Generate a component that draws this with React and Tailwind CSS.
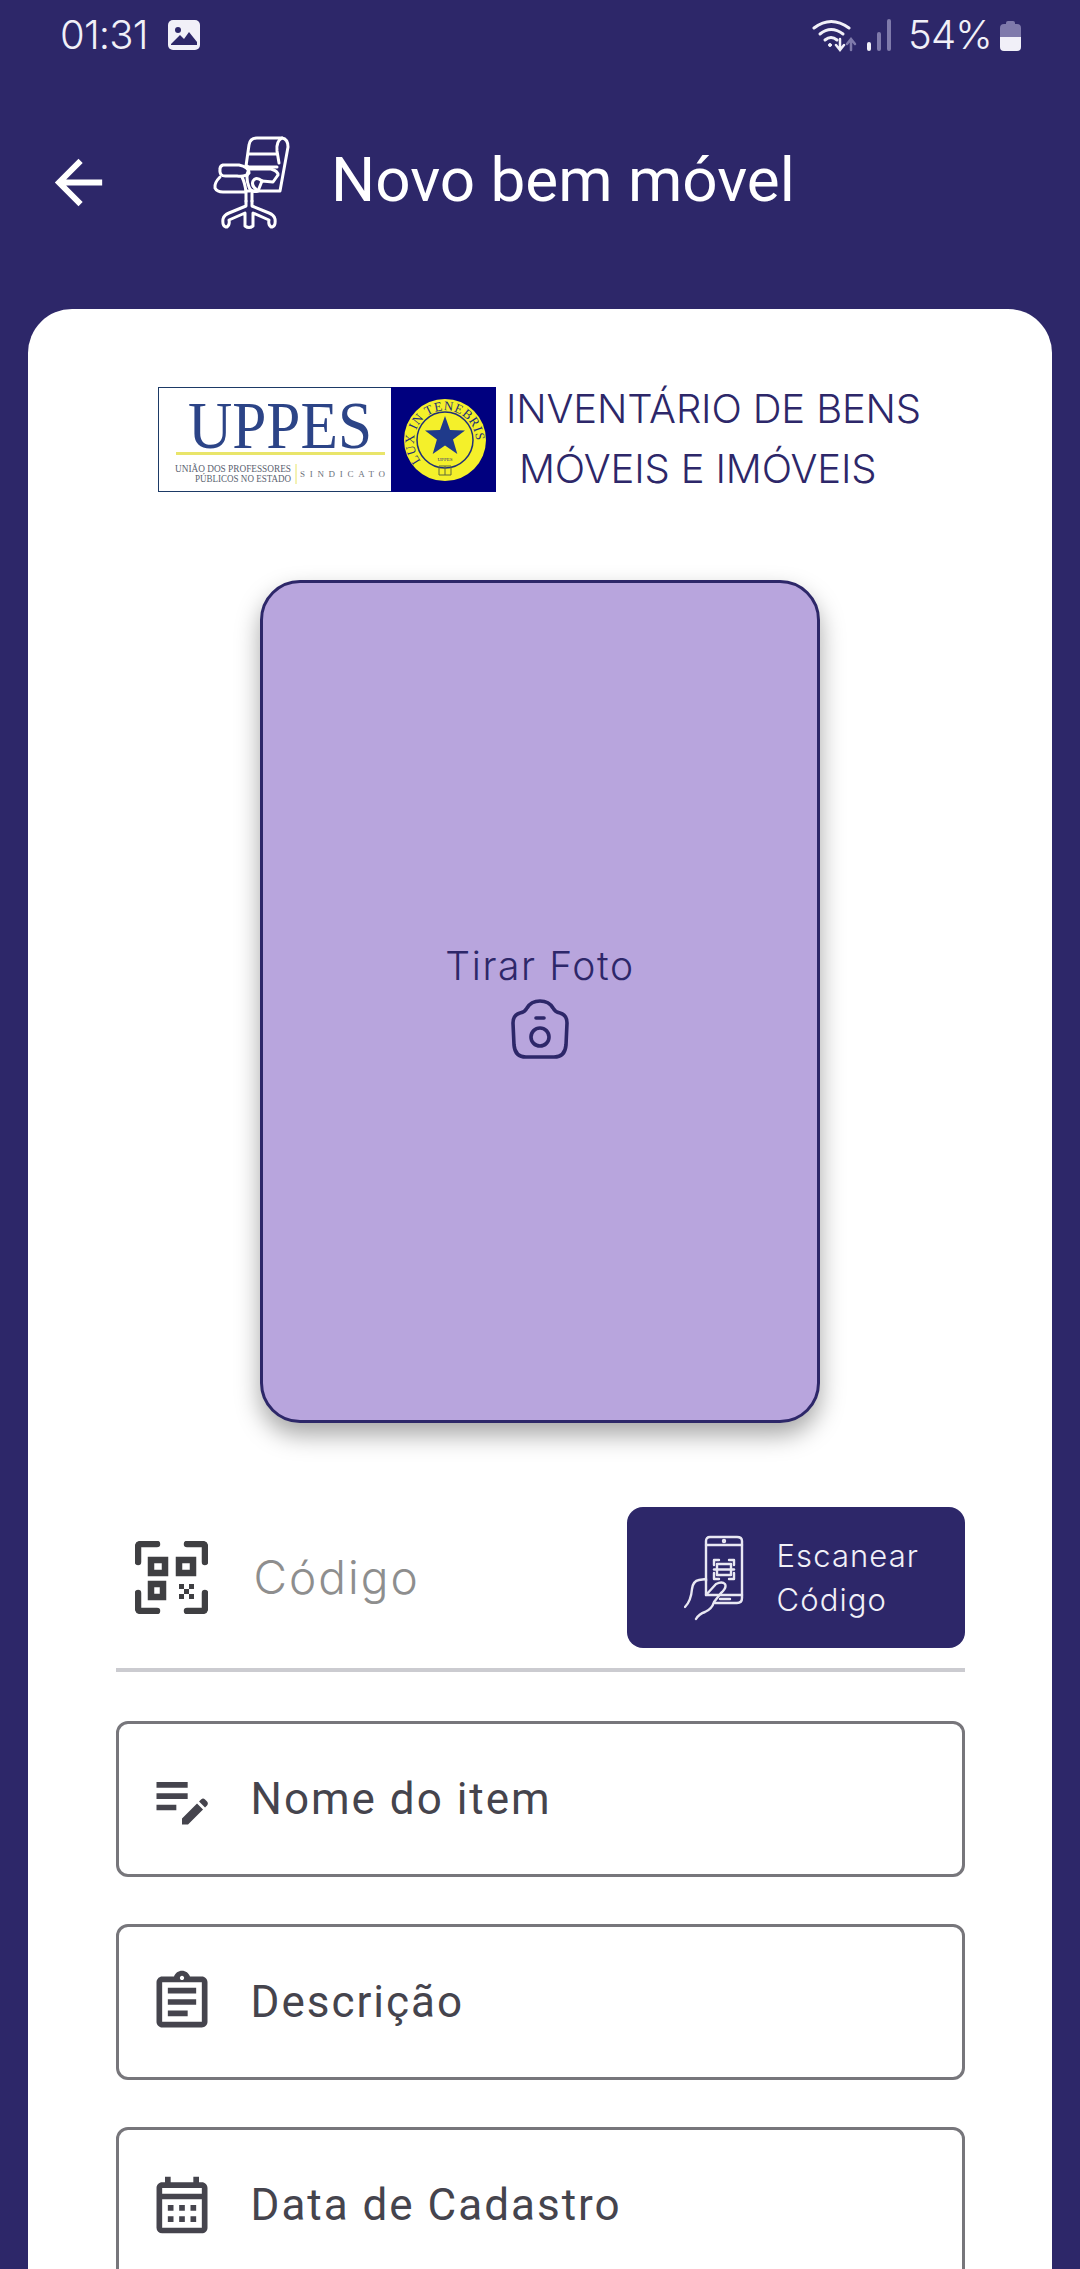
import { MdArrowBack, MdEditNote, MdOutlineAssignment, MdOutlineCalendarMonth } from 'react-icons/md';

const StatusBar = () => (
    <div className="h-[70px] shrink-0 flex items-end justify-between pb-[12px] pl-[60px] pr-[59px] text-[#f1f0f8] font-['Inter',sans-serif] text-[40px] leading-[46px]">
        <div className="flex items-center gap-[16px]">
            <span className="w-[92px] tracking-[-0.8px] font-light">01:31</span>
            <svg width="32" height="30" viewBox="0 0 32 30">
                <rect width="32" height="30" rx="5" fill="#f1f0f8" />
                <circle cx="10" cy="10" r="3" fill="#2d2769" />
                <path d="M3 24 L12 15 L16 19 L21 12 L29 22 L29 25 L3 25 Z" fill="#2d2769" />
            </svg>
        </div>
        <div className="flex items-center">
            <svg width="84" height="34" viewBox="0 0 84 34" fill="none" stroke="#f1f0f8" strokeLinecap="round">
                <path d="M3 10 Q20 -3 38 10" strokeWidth="3" />
                <path d="M9 16 Q20 7 32 16" strokeWidth="3" />
                <path d="M14 22 Q20 17 26 22" strokeWidth="3" />
                <circle cx="19" cy="27" r="1.5" fill="#f1f0f8" />
                <path d="M29 21 V31 M25 27 L29 32 L33 27" strokeWidth="2.5" />
                <path d="M40 32 V22 M36 26 L40 21 L44 26" strokeWidth="2.5" stroke="#7f7aab" />
                <path d="M58 31 V26" strokeWidth="4" />
                <path d="M68 31 V16" strokeWidth="4" stroke="#7f7aab" />
                <path d="M78 31 V3" strokeWidth="4" stroke="#7f7aab" />
            </svg>
            <span className="ml-[13px] w-[86px] tracking-[-0.8px] font-light">54%</span>
            <svg className="ml-[6px]" width="21" height="31" viewBox="0 0 21 31">
                <path d="M6 3 Q6 1 8 1 H13 Q15 1 15 3 V4 H17 Q21 4 21 8 V17 H0 V8 Q0 4 4 4 H6 Z" fill="#7f7aab" />
                <path d="M0 17 H21 V27 Q21 31 17 31 H4 Q0 31 0 27 Z" fill="#f1f0f8" />
            </svg>
        </div>
    </div>
);

const ChairIcon = () => (
    <svg width="78" height="97" viewBox="13 13 78 97" fill="none" stroke="#ffffff" strokeWidth="3" strokeLinejoin="round" strokeLinecap="round">
        <path d="M47 45 L50 24 Q51 17 58 17 H83 Q89 18 89 26 L81 70 H47" />
        <path d="M83 17 Q77 20 78 30 L80 42" />
        <path d="M50 33 H78" />
        <path d="M48 45 L50 46 H78" />
        <path d="M24 44 H40 Q50 46 50 52 Q47 56 38 55 H28 Q20 56 21 48 Q21 45 24 44 Z" />
        <path d="M21 56 Q15 62 16 67 Q18 71 24 71 H47 Q46 62 43 56" />
        <path d="M50 48 H72 Q79 50 79 54 L74 61 L63 60 L59 70 Q52 72 50 66 Q46 56 50 48 Z" />
        <path d="M63 60 Q57 55 54 60 Q52 65 58 69" />
        <path d="M47 72 V80 M53 72 V80" />
        <path d="M47 80 V85 L30 92 Q25 94 24 98 Q23 106 28 106 Q31 104 30 99 L46 92 V105 Q50 108 54 105 V92 L70 99 Q69 104 72 106 Q77 106 76 98 Q75 94 70 92 L53 85 V80" />
    </svg>
);

const UppesLogo = () => (
    <svg width="338" height="105" viewBox="158 387 338 105" className="shrink-0">
        <rect x="158.500" y="387.500" width="337" height="104" fill="#ffffff" stroke="#1d3a66" />
        <rect x="391" y="387" width="105" height="105" fill="#00007f" />
        <text x="280" y="448" textAnchor="middle" fontFamily="'Liberation Serif',serif" fontSize="68" textLength="184" lengthAdjust="spacingAndGlyphs" fill="#2c4487">UPPES</text>
        <rect x="176" y="452" width="209" height="3" fill="#e9e56a" />
        <text x="233" y="472" textAnchor="middle" fontFamily="'Liberation Serif',serif" fontSize="9.5" textLength="116" lengthAdjust="spacingAndGlyphs" fill="#5a5f70">UNIÃO DOS PROFESSORES</text>
        <text x="243" y="482" textAnchor="middle" fontFamily="'Liberation Serif',serif" fontSize="9.5" textLength="96" lengthAdjust="spacingAndGlyphs" fill="#5a5f70">PÚBLICOS NO ESTADO</text>
        <path d="M296 464 V484" stroke="#e9e56a" />
        <text x="300" y="477" fontFamily="'Liberation Serif',serif" fontSize="9" textLength="85" fill="#6b6f7a">SINDICATO</text>
        <circle cx="445" cy="440" r="41" fill="#f4f02a" />
        <circle cx="445" cy="440" r="28" fill="none" stroke="#1f2f78" strokeWidth="1.5" />
        <path id="luxArc" d="M421 461 A31 31 0 1 1 469 461" fill="none" />
        <text fontFamily="'Liberation Serif',serif" fontSize="13" letterSpacing="0.6" fill="#1f2f78">
            <textPath href="#luxArc">LUX IN TENEBRIS</textPath>
        </text>
        <path d="M445 416 L450 430 L465 430.500 L453 439.600 L457.300 454 L445 445.500 L432.700 454 L436.900 439.600 L425 430.500 L440 430 Z" fill="#1f3a8a" />
        <text x="445" y="461" textAnchor="middle" fontFamily="'Liberation Serif',serif" fontSize="5" fill="#1f2f78">UPPES</text>
        <path d="M439 466 H451 V475 H439 Z M445 466 V475" fill="none" stroke="#5f6a3a" strokeWidth="1" />
    </svg>
);

const CameraIcon = () => (
    <svg width="58" height="60" viewBox="0 0 58 60" fill="none" stroke="#2d2769" strokeWidth="3.6" strokeLinecap="round" strokeLinejoin="round">
        <path d="M2 24 Q2 16 9 14 Q14 13 16 9 Q20 2 29 2 Q38 2 42 9 Q44 13 49 14 Q56 16 56 24 L55 46 Q54 58 43 58 H15 Q4 58 3 46 Z" />
        <circle cx="29" cy="38" r="9" />
        <path d="M25 19 H33" />
    </svg>
);

const QrIcon = () => (
    <svg width="73" height="73" viewBox="0 0 73 73" fill="none" stroke="#3f3f42" strokeWidth="6.5" strokeLinecap="round">
        <path d="M3 21 V6 Q3 3 6 3 H22" />
        <path d="M52 3 H67 Q70 3 70 6 V21" />
        <path d="M3 52 V67 Q3 70 6 70 H22" />
        <path d="M52 70 H67 Q70 70 70 67 V52" />
        <rect x="16" y="19" width="14" height="13" />
        <rect x="44" y="19" width="14" height="13" />
        <rect x="16" y="43" width="12" height="13" />
        <path d="M44 43 h5 v5 h-5 z M54 43 h5 v5 h-5 z M49 48 h5 v5 h-5 z M44 53 h5 v5 h-5 z M54 53 h5 v5 h-5 z" fill="#3f3f42" stroke="none" />
    </svg>
);

const ScanPhoneIcon = () => (
    <svg width="60" height="86" viewBox="0 0 60 86" fill="none" stroke="#e9e8f3" strokeWidth="2.4" strokeLinecap="round" strokeLinejoin="round">
        <path d="M22 46 V6 Q22 2 26 2 H53 Q58 2 58 6 V63 Q58 68 53 68 H31" />
        <path d="M22 10 H58 M22 60 H58" />
        <path d="M36 64 H46" />
        <circle cx="40" cy="6" r="1" />
        <path d="M30 30 V25 H35 M45 25 H50 V30 M30 38 V44 H35 M45 44 H50 V38" />
        <rect x="33" y="29" width="14" height="11" />
        <path d="M30 34.500 H50" />
        <path d="M1 72 Q7 66 8 54 Q9 46 15 45 L22 44 V60 L32 49 Q38 46 41 49 Q43 53 37 58 L30 67 Q28 74 21 77 Q15 79 12 84" />
    </svg>
);

const Field = ({ icon: Icon, label }) => (
    <div className="h-[156px] shrink-0 rounded-[12px] border-[3px] border-[#77767b] flex items-center pl-[29px] gap-[35px] text-[#45444d]">
        <Icon size={68} className="shrink-0" />
        <span className="text-[44px] tracking-[2px] font-['Roboto',sans-serif]">{label}</span>
    </div>
);

const App = () => {
    return (
        <div className="w-[1080px] h-[2269px] overflow-hidden bg-[#2d2769] flex flex-col">
            <StatusBar />

            {/* Cabeçalho */}
            <div className="h-[239px] shrink-0 flex items-start pt-[41px] pl-[43px] text-white">
                <div className="h-[142px] flex items-center">
                    <MdArrowBack size={71} />
                    <div className="ml-[98px]"><ChairIcon /></div>
                    <h1 className="ml-[41px] mb-[5px] text-[62px] font-['Roboto',sans-serif] font-normal">Novo bem móvel</h1>
                </div>
            </div>

            {/* Card branco */}
            <div className="mx-[28px] flex-1 bg-white rounded-t-[44px] flex flex-col items-center pt-[70px]">
                <div className="flex items-center gap-[10px] w-full pl-[130px]">
                    <UppesLogo />
                    <div className="text-[#2d2769] font-['Inter',sans-serif] font-light text-[40px] leading-[60px] tracking-[-0.15px] whitespace-nowrap">
                        <div>INVENTÁRIO DE BENS</div>
                        <div className="ml-[13px]">MÓVEIS E IMÓVEIS</div>
                    </div>
                </div>

                <div className="mt-[81px] w-[560px] h-[843px] shrink-0 rounded-[40px] border-[3px] border-[#2d2769] bg-[#b8a5dd] shadow-[0_12px_24px_rgba(0,0,0,0.35)] flex flex-col items-center justify-center text-[#2d2769]">
                    <span className="text-[39px] leading-[56px] font-light font-['Inter',sans-serif] tracking-[1.6px] mt-[-6px]">Tirar Foto</span>
                    <div className="mt-[5px]"><CameraIcon /></div>
                </div>

                <div className="mt-[84px] w-[849px] flex flex-col">
                    <div className="flex items-center h-[141px]">
                        <div className="ml-[19px]"><QrIcon /></div>
                        <span className="ml-[46px] text-[#8e8e8e] text-[46px] tracking-[2px] font-light font-['Inter',sans-serif] flex-1">Código</span>
                        <div className="w-[338px] h-[141px] rounded-[16px] bg-[#2d2769] flex items-center pl-[57px] text-[#f1f0f8]">
                            <ScanPhoneIcon />
                            <span className="ml-[33px] text-[31px] tracking-[1.1px] leading-[44px] font-light font-['Inter',sans-serif]">Escanear<br />Código</span>
                        </div>
                    </div>
                    <div className="h-[4px] bg-[#cbcbd0] mt-[20px]" />
                    <div className="mt-[49px] flex flex-col gap-[47px]">
                        <Field icon={MdEditNote} label="Nome do item" />
                        <Field icon={MdOutlineAssignment} label="Descrição" />
                        <Field icon={MdOutlineCalendarMonth} label="Data de Cadastro" />
                    </div>
                </div>
            </div>
        </div>
    );
};

export default App;
